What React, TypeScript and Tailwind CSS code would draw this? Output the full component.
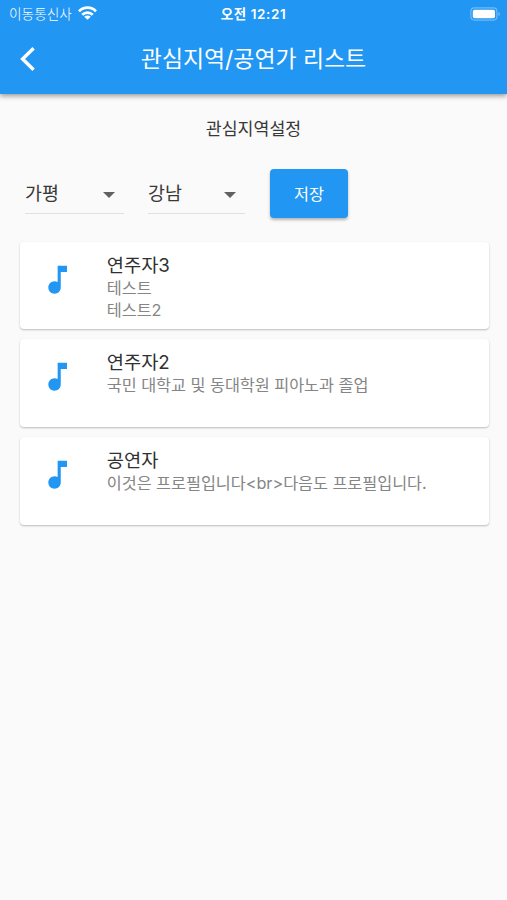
const performers = [
  { name: '연주자3', lines: ['테스트', '테스트2'] },
  { name: '연주자2', lines: ['국민 대학교 및 동대학원 피아노과 졸업'] },
  { name: '공연자', lines: ['이것은 프로필입니다<br>다음도 프로필입니다.'] },
];

function StatusBar() {
  return (
    <div className="grid h-[27px] grid-cols-[1fr_auto_1fr] items-center pl-[9px] pr-[6px] leading-none">
      <div className="flex items-center gap-[6px]">
        <span className="pt-[2px] text-[13.7px] font-light">이동통신사</span>
        <svg className="h-[14px] w-[19px]" viewBox="0 0 19 14" fill="none" stroke="currentColor" strokeWidth="2.7">
          <path d="M1 5.300C5.600.400 13.400.400 18 5.300" />
          <path d="M4.200 8.800c3-2.900 7.600-2.900 10.600 0" />
          <path d="M9.500 13.800 6.200 10.700c1.900-1.700 4.700-1.700 6.600 0z" fill="currentColor" stroke="none" />
        </svg>
      </div>
      <span className="pt-[2px] pr-[3px] text-[13.500px] font-semibold tracking-[0.6px]">오전 12:21</span>
      <svg className="h-[14px] w-[31px] justify-self-end" viewBox="0 0 31 14">
        <rect x="0.900" y="0.900" width="26" height="12.200" rx="3.500" fill="none" stroke="#70bbf8" strokeWidth="1.200" />
        <rect x="2.800" y="2.800" width="22.200" height="8.400" rx="1.800" fill="white" />
        <path d="M28.500 4.800c2 .8 2 3.600 0 4.400z" fill="#70bbf8" />
      </svg>
    </div>
  );
}

function Select({ value, width }: { value: string; width: string }) {
  return (
    <div className={`flex h-[41px] items-center justify-between border-b border-[#e0e0e0] pr-[9px] ${width}`}>
      <span className="pt-px text-[18.400px] text-[#383838]">{value}</span>
      <svg className="mt-[3px] h-[6px] w-[12px]" viewBox="0 0 12 6" fill="#616161">
        <path d="M0 0h12L6 6z" />
      </svg>
    </div>
  );
}

export default function App() {
  return (
    <div className="min-h-[900px] w-full bg-[#fafafa] font-['Inter','Noto_Sans_CJK_KR',sans-serif]">
      <header className="relative h-[94px] bg-[#2196f3] text-white shadow-[0_2px_5px_rgba(0,0,0,0.4)]">
        <StatusBar />
        <div className="grid h-[64px] grid-cols-[80px_1fr_80px] items-center">
          <svg className="ml-[20px] h-[24px] w-[15px]" viewBox="0 0 15 24" fill="none" stroke="currentColor" strokeWidth="3.400">
            <path d="M13.600 1.300 2.600 12l11 10.700" />
          </svg>
          <h1 className="pt-px text-center text-[22.900px] font-normal whitespace-nowrap">관심지역/공연가 리스트</h1>
        </div>
      </header>
      <main className="px-[20px]">
        <p className="pt-[22px] text-center text-[17.300px] leading-[26px] text-[#383838]">관심지역설정</p>
        <div className="flex h-[99px] items-center pl-[5px] pt-[4px]">
          <Select value="가평" width="w-[99px]" />
          <div className="w-[24px]" />
          <Select value="강남" width="w-[97px]" />
          <button className="ml-[25px] h-[49px] w-[78px] rounded-[4px] bg-[#2196f3] pt-px text-[16.300px] text-white shadow-[0_2px_3px_rgba(0,0,0,0.28)]">저장</button>
        </div>
        <ul className="mt-[0.500px] flex flex-col gap-[10.200px]">
          {performers.map((p) => (
            <li key={p.name} className="flex h-[87.600px] w-[469px] rounded-[4px] bg-white shadow-[0_1px_2px_rgba(0,0,0,0.25)]">
              <svg className="ml-[18.500px] mt-[19px] size-[37.300px] shrink-0" viewBox="0 0 24 24" fill="#2196f3">
                <path d="M12 3v10.550c-.59-.34-1.270-.55-2-.55-2.210 0-4 1.790-4 4s1.790 4 4 4 4-1.790 4-4V7h4V3h-6z" />
              </svg>
              <div className="ml-[31px] pt-[12px]">
                <h2 className="text-[18.700px] font-normal leading-[23px] text-[#303030]">{p.name}</h2>
                {p.lines.map((line) => (
                  <p key={line} className="text-[16.300px] leading-[22px] tracking-[-0.050px] text-[#858585]">{line}</p>
                ))}
              </div>
            </li>
          ))}
        </ul>
      </main>
    </div>
  );
}
